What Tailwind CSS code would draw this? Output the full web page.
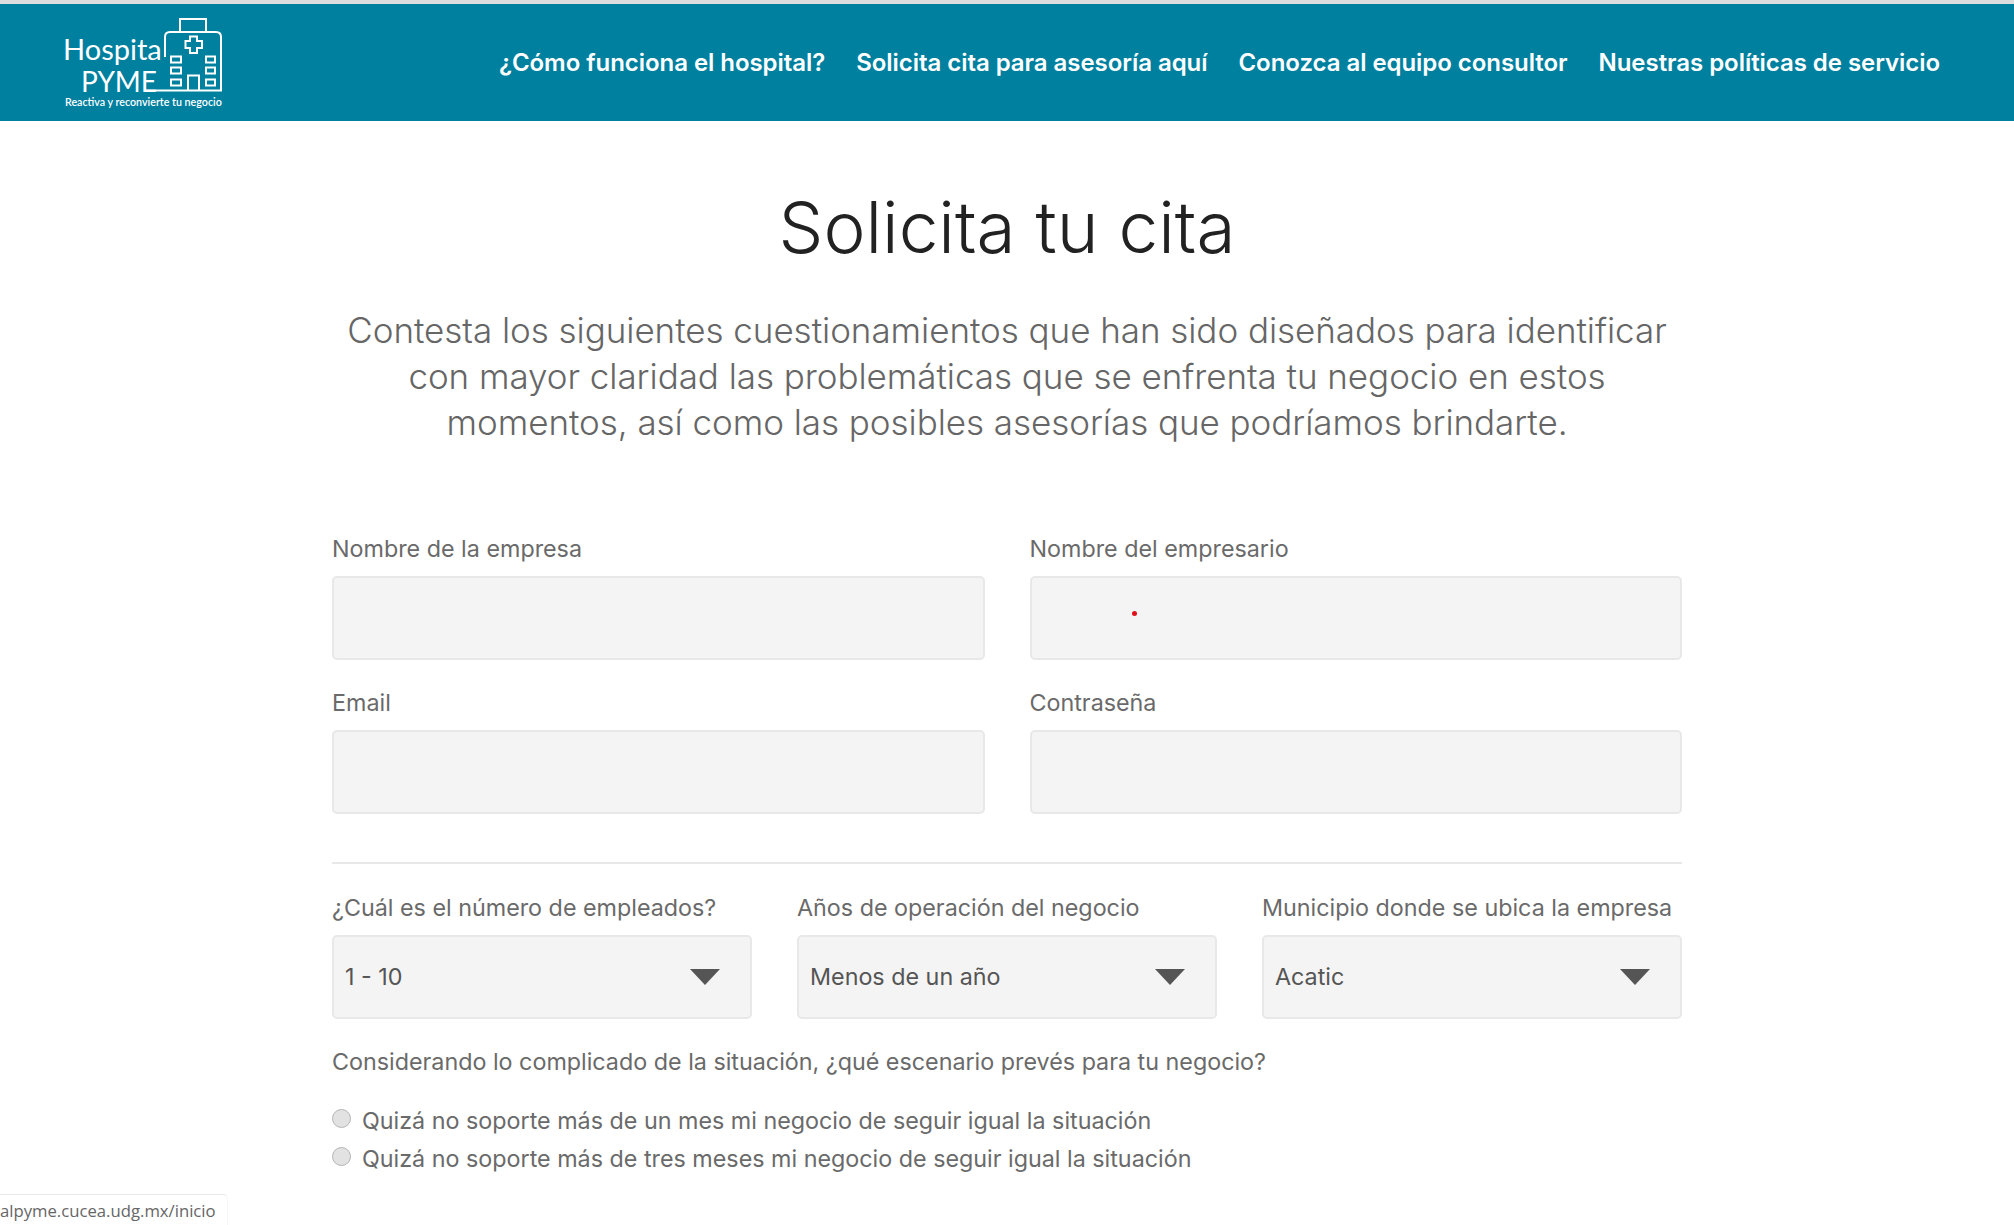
<!DOCTYPE html>
<html lang="es"><head><meta charset="utf-8"><title>Solicita tu cita</title>
<script src="https://cdn.jsdelivr.net/npm/@tailwindcss/browser@4"></script></head>
<body class="bg-white font-['Inter',sans-serif] h-[1225px] overflow-hidden relative">
<div class="h-1 bg-[#dddddd]"></div>
<header class="h-[117px] bg-[#00809f] flex items-center justify-between pl-[62px] pr-[74px]">
  <div class="relative w-[160px] h-[92px] text-white">
    <svg class="absolute left-0 top-0" width="160" height="92" viewBox="0 0 160 92" fill="none" stroke="white" stroke-width="2">
      <path d="M118 15V2H144V15"/>
      <path d="M103 40V20Q103 15 108 15H154Q159 15 159 20V73.5H83"/>
      <path d="M128 19.5h7v4.500h5v7h-5v5h-7v-5h-4.500v-7h4.500z"/>
      <rect x="109" y="39.500" width="10" height="6"/><rect x="109" y="50.500" width="10" height="6"/><rect x="109" y="62.500" width="10" height="6"/>
      <rect x="144" y="39.500" width="9" height="6"/><rect x="144" y="50.500" width="9" height="6"/><rect x="144" y="62.500" width="9" height="6"/>
      <path d="M126 73.500V58.500H137V73.500"/>
    </svg>
    <span class="absolute left-[1px] top-[14px] text-[29px] leading-[36px] font-['Lato',sans-serif]">Hospita</span>
    <span class="absolute left-[19px] top-[49px] text-[28px] leading-[30px] font-['Lato',sans-serif]">PYME</span>
    <span class="absolute left-[3px] top-[79px] text-[10.7px] leading-[12px] font-semibold font-['Lato',sans-serif] whitespace-nowrap">Reactiva y reconvierte tu negocio</span>
  </div>
  <nav class="flex gap-[31px] text-white text-[24px] font-semibold tracking-[-0.05px] whitespace-nowrap">
    <a>¿Cómo funciona el hospital?</a>
    <a>Solicita cita para asesoría aquí</a>
    <a>Conozca al equipo consultor</a>
    <a>Nuestras políticas de servicio</a>
  </nav>
</header>
<main class="w-[1350px] mx-auto text-center">
  <h1 class="mt-[66px] text-[71px] leading-[80px] font-light text-[#222222]">Solicita tu cita</h1>
  <p class="mt-[40px] text-[35px] leading-[46px] font-light text-[#666666] tracking-[-0.05px]">Contesta los siguientes cuestionamientos que han sido diseñados para identificar<br>con mayor claridad las problemáticas que se enfrenta tu negocio en estos<br>momentos, así como las posibles asesorías que podríamos brindarte.</p>
  <form class="mt-[90px] text-left text-[23.3px] text-[#6a6a6a]">
    <div class="grid grid-cols-2 gap-x-[45px] gap-y-[29px]">
      <div><label class="block leading-[28px]">Nombre de la empresa</label><div class="mt-[13px] h-[84px] bg-[#f4f4f4] border-2 border-[#e8e8e8] rounded-[5px]"></div></div>
      <div class="relative"><label class="block leading-[28px]">Nombre del empresario</label><div class="mt-[13px] h-[84px] bg-[#f4f4f4] border-2 border-[#e8e8e8] rounded-[5px]"></div><span class="absolute left-[102px] top-[76px] w-[5px] h-[5px] rounded-full bg-[#e0101a]"></span></div>
      <div><label class="block leading-[28px]">Email</label><div class="mt-[13px] h-[84px] bg-[#f4f4f4] border-2 border-[#e8e8e8] rounded-[5px]"></div></div>
      <div><label class="block leading-[28px]">Contraseña</label><div class="mt-[13px] h-[84px] bg-[#f4f4f4] border-2 border-[#e8e8e8] rounded-[5px]"></div></div>
    </div>
    <hr class="mt-[48px] border-t-2 border-[#e8e8e8]">
    <div class="mt-[30px] grid grid-cols-3 gap-x-[45px]">
      <div><label class="block leading-[28px] whitespace-nowrap">¿Cuál es el número de empleados?</label>
        <div class="mt-[13px] h-[84px] bg-[#f4f4f4] border-2 border-[#e8e8e8] rounded-[5px] flex items-center justify-between pl-[11px] pr-[30px] text-[#555555]"><span>1 - 10</span><svg width="30" height="16" viewBox="0 0 30 16"><path d="M0 0H30L15 16Z" fill="#555555"/></svg></div></div>
      <div><label class="block leading-[28px] whitespace-nowrap">Años de operación del negocio</label>
        <div class="mt-[13px] h-[84px] bg-[#f4f4f4] border-2 border-[#e8e8e8] rounded-[5px] flex items-center justify-between pl-[11px] pr-[30px] text-[#555555]"><span>Menos de un año</span><svg width="30" height="16" viewBox="0 0 30 16"><path d="M0 0H30L15 16Z" fill="#555555"/></svg></div></div>
      <div><label class="block leading-[28px] whitespace-nowrap">Municipio donde se ubica la empresa</label>
        <div class="mt-[13px] h-[84px] bg-[#f4f4f4] border-2 border-[#e8e8e8] rounded-[5px] flex items-center justify-between pl-[11px] pr-[30px] text-[#555555]"><span>Acatic</span><svg width="30" height="16" viewBox="0 0 30 16"><path d="M0 0H30L15 16Z" fill="#555555"/></svg></div></div>
    </div>
    <p class="mt-[29px] leading-[28px] whitespace-nowrap">Considerando lo complicado de la situación, ¿qué escenario prevés para tu negocio?</p>
    <div class="mt-[26px] flex items-center h-[38px] whitespace-nowrap"><span class="w-[19px] h-[19px] -mt-[6px] mr-[11px] rounded-full border border-[#b5b5b5] bg-[#e2e2e2]"></span>Quizá no soporte más de un mes mi negocio de seguir igual la situación</div>
    <div class="flex items-center h-[38px] whitespace-nowrap"><span class="w-[19px] h-[19px] -mt-[6px] mr-[11px] rounded-full border border-[#b5b5b5] bg-[#e2e2e2]"></span>Quizá no soporte más de tres meses mi negocio de seguir igual la situación</div>
  </form>
</main>
<div class="absolute left-0 bottom-0 w-[228px] h-[31px] overflow-hidden bg-white border-t border-r border-t-[#e8e8e8] border-r-[#f6f6f6] rounded-tr-[5px] text-[16.7px] leading-[31px] text-[#666666] font-['Open_Sans',sans-serif] whitespace-nowrap"><span class="block">alpyme.cucea.udg.mx/inicio</span></div>
</body></html>
